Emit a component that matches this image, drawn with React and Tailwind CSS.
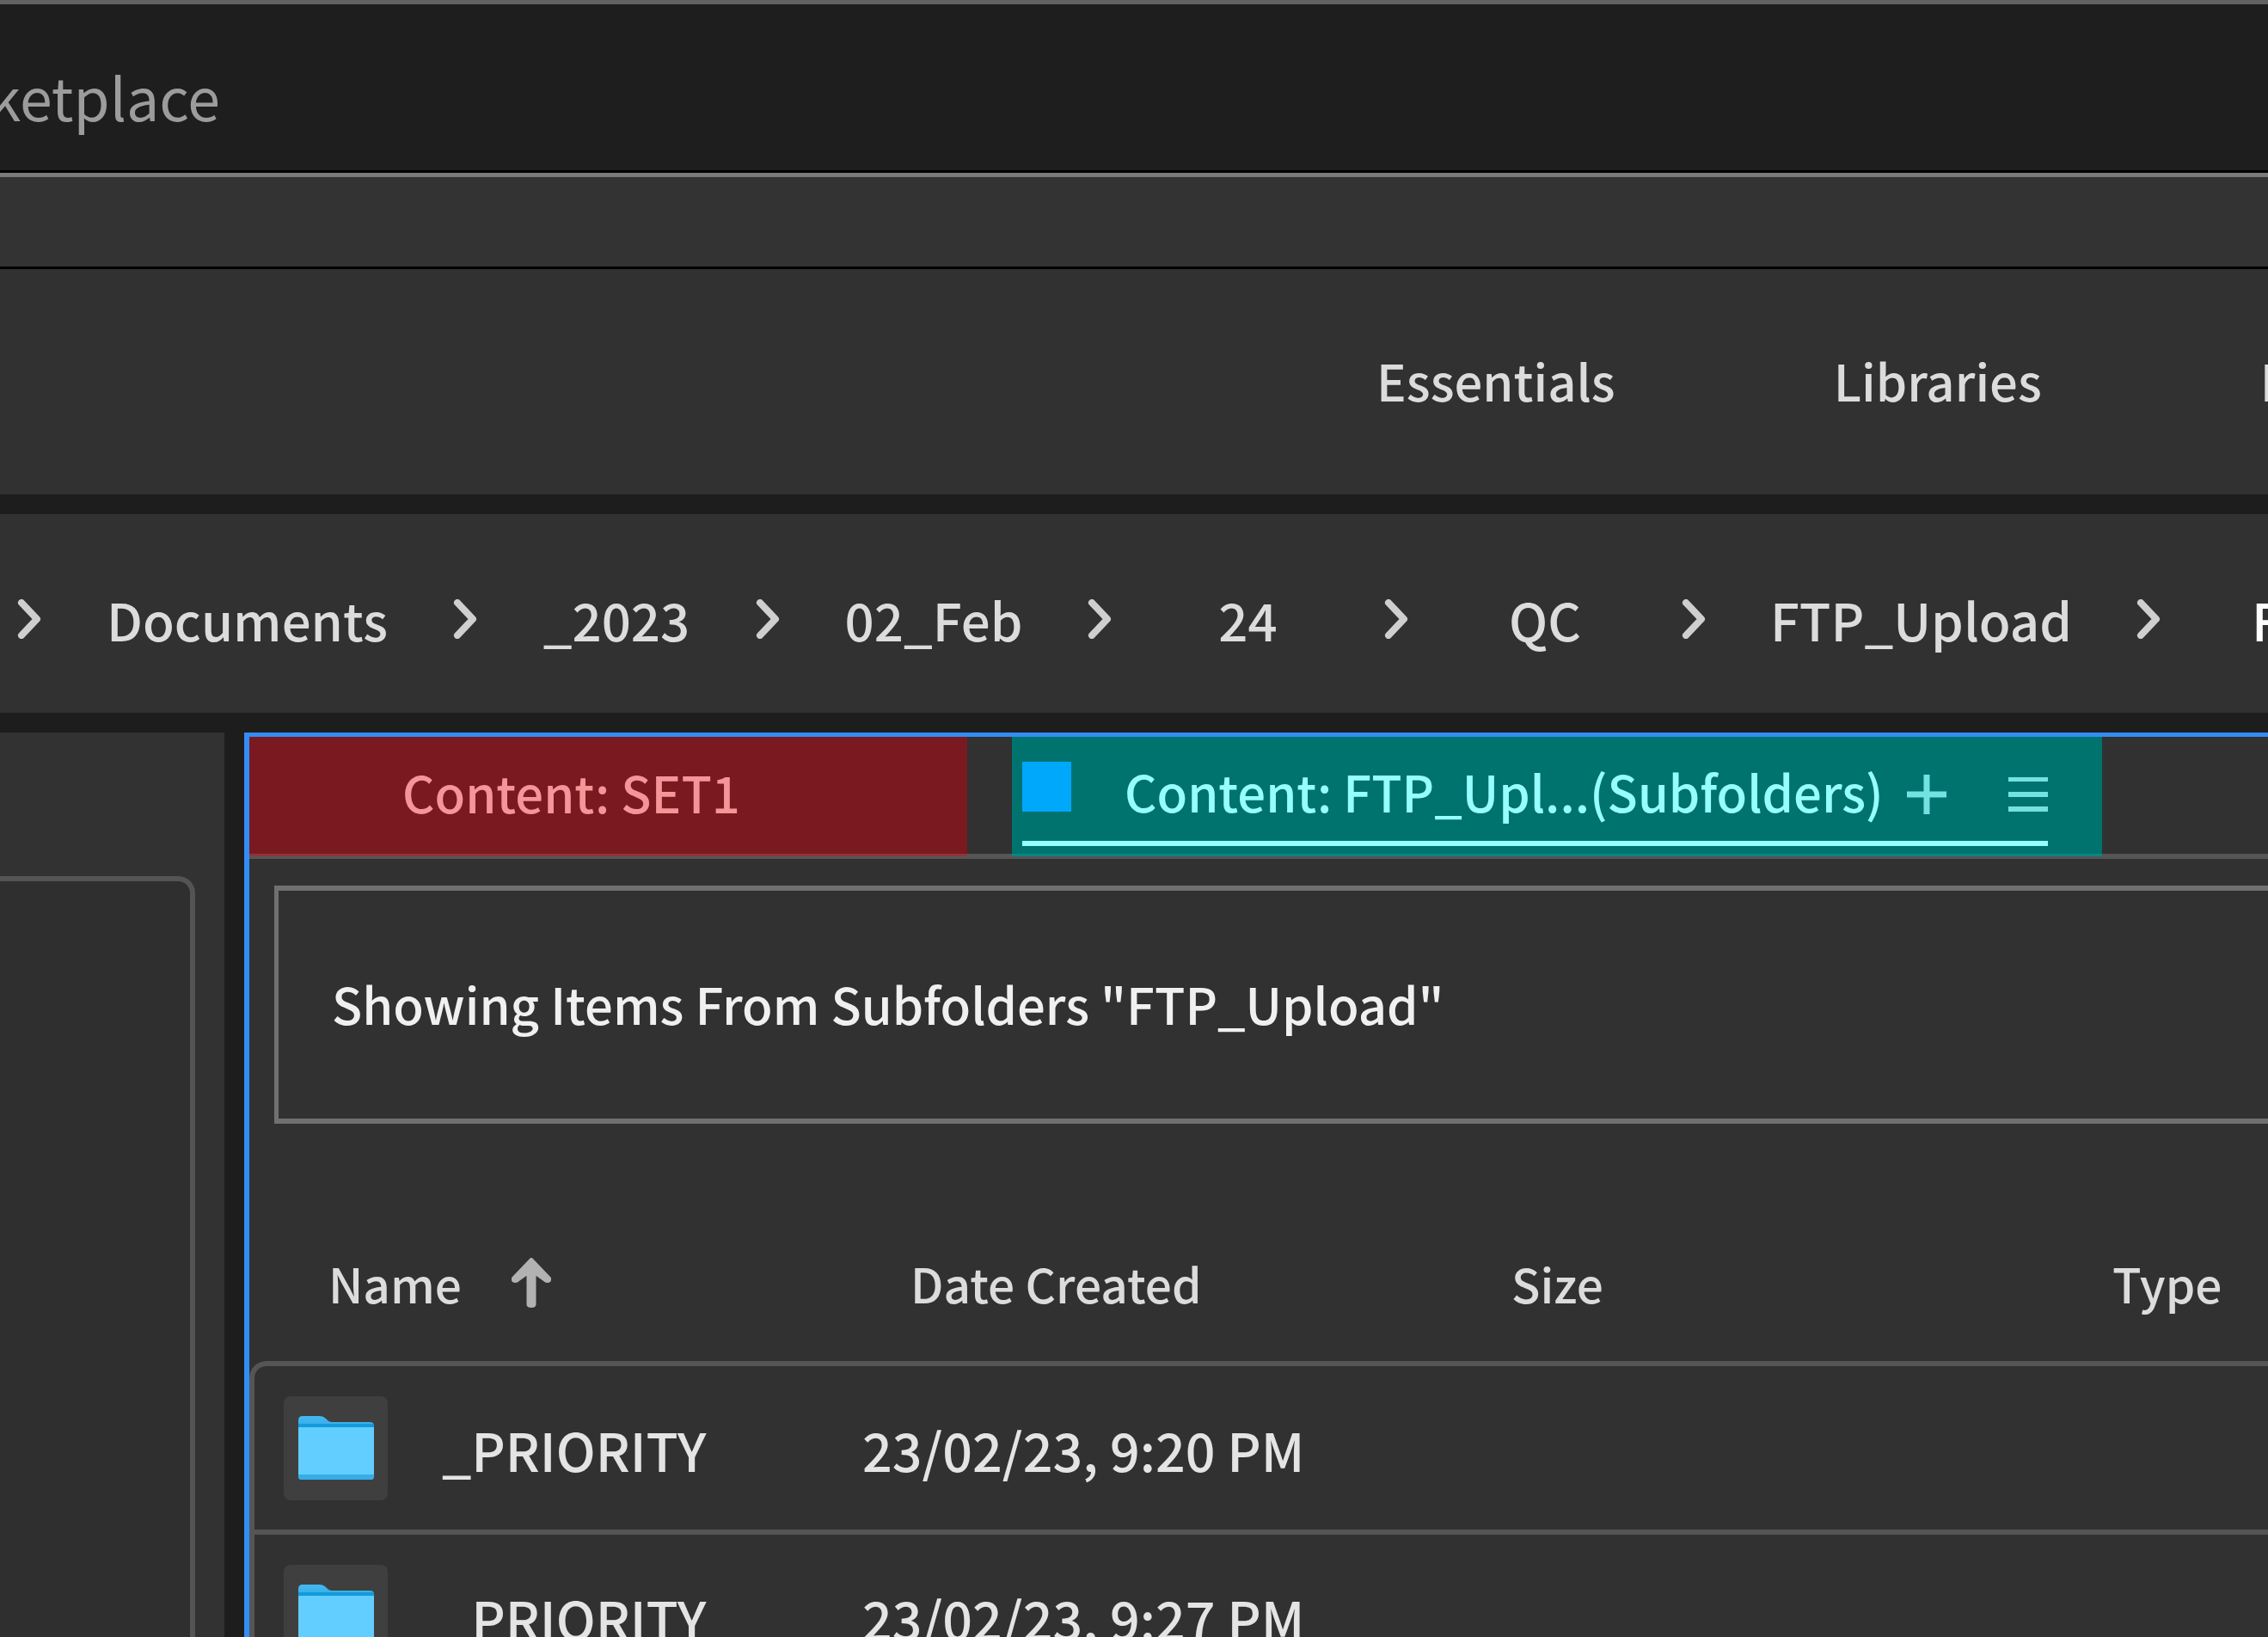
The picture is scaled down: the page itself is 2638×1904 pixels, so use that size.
const crumbs = [
  { label: 'Documents', width: 'w-[479px]' },
  { label: '_2023', width: 'w-[324px]' },
  { label: '02_Feb', width: 'w-[358px]' },
  { label: '24', width: 'w-[317px]' },
  { label: 'QC', width: 'w-[318px]' },
  { label: 'FTP_Upload', width: 'w-[501px]' },
];

const files = [
  { id: 1, name: '_PRIORITY', created: '23/02/23, 9:20 PM' },
  { id: 2, name: '_PRIORITY', created: '23/02/23, 9:27 PM' },
];

function Chevron() {
  return (
    <svg viewBox="0 0 28 46" className="h-[46px] w-7 shrink-0" fill="none" stroke="#cfcfcf" strokeWidth="8" strokeLinecap="round" strokeLinejoin="round" aria-hidden="true">
      <path d="M5 4 23 23 5 42" />
    </svg>
  );
}

function FolderIcon() {
  return (
    <svg viewBox="0 0 88 76" className="h-[76px] w-[88px]" aria-hidden="true">
      <defs>
        <linearGradient id="folderTab" x1="0" y1="0" x2="0" y2="1">
          <stop offset="0" stopColor="#45b9f0" />
          <stop offset="1" stopColor="#1b9fdf" />
        </linearGradient>
      </defs>
      <path d="M0 6Q0 1 5 1H25Q29 1 32 4L34 6Q36 8 39 8H83Q88 8 88 12V30H0Z" fill="url(#folderTab)" />
      <path d="M0 10H88V18H0Z" fill="#149ad9" />
      <path d="M0 14H88V71Q88 75 84 75H4Q0 75 0 71Z" fill="#62cdff" />
      <path d="M0 69H88V71Q88 75 84 75H4Q0 75 0 71Z" fill="#35aee8" />
    </svg>
  );
}

export default function App() {
  return (
    <div className="flex h-screen w-full flex-col overflow-hidden bg-[#1d1d1d] font-['Noto_Sans_CJK_SC','Noto_Sans',sans-serif] text-[58px] leading-[80px] font-medium whitespace-nowrap text-[#dcdcdc]">
      <header className="flex h-[201px] shrink-0 items-center border-t-[5px] border-b-[3px] border-t-[#626262] border-b-black bg-[#1e1e1e]">
        <div className="flex w-64 justify-end pt-5 text-[68px] font-normal text-[#9c9c9c]">Marketplace</div>
      </header>
      <div className="h-28 shrink-0 border-t-[5px] border-b-[3px] border-t-[#7a7a7a] border-b-black bg-[#333333]" />

      <nav aria-label="Workspaces" className="flex h-[262px] shrink-0 items-center gap-[254px] bg-[#313131] pb-1 pl-[1601px]">
        <button type="button" className="shrink-0">Essentials</button>
        <button type="button" className="shrink-0">Libraries</button>
        <button type="button" className="shrink-0">Filmstrip</button>
      </nav>

      <nav aria-label="Path" className="mt-[23px] flex h-[231px] shrink-0 items-center bg-[#313131] pt-3 pl-5 text-[60px]">
        <Chevron />
        {crumbs.map((crumb) => (
          <div key={crumb.label} className="flex shrink-0 items-center">
            <a href="#" className={`${crumb.width} text-center`}>{crumb.label}</a>
            <Chevron />
          </div>
        ))}
        <a href="#" className="shrink-0 pl-[106px] text-white">FTP_Upload</a>
      </nav>

      <main className="mt-[23px] flex min-h-0 flex-1 gap-[23px]">
        <aside className="w-[261px] shrink-0 bg-[#323232] pt-[167px] pr-[34px]">
          <div className="h-full rounded-tr-[20px] border-t-[6px] border-r-[6px] border-[#545454] bg-[#2f2f2f]" />
        </aside>

        <section className="min-w-0 flex-1 border-t-[5px] border-l-[6px] border-[#338df7] bg-[#313131]">
          <div className="flex h-[142px] gap-[52px] border-b-[6px] border-[#555555]">
            <button type="button" className="flex h-[139px] w-[835px] shrink-0 items-center border-b-[3px] border-[#91343a] bg-[#7a1a20] pb-2 pl-[178px] text-[#f59499]">
              Content: SET1
            </button>
            <div className="h-[139px] w-[1268px] shrink-0 border-b-[3px] border-[#058786] bg-[#00736f] pr-[63px] pl-3">
              <div className="flex h-[127px] items-center border-b-[6px] border-[#96fffd] pt-3 text-[#96fffd]">
                <span className="mt-[17px] h-[58px] w-[57px] shrink-0 self-start bg-[#00a8fb]" />
                <button type="button" className="ml-[62px] min-w-0 flex-1 pb-2 text-left">Content: FTP_Upl...(Subfolders)</button>
                <button type="button" aria-label="New panel" className="mr-[72px]">
                  <svg viewBox="0 0 46 46" className="size-[46px]" fill="none" stroke="#74e2e0" strokeWidth="7" aria-hidden="true">
                    <path d="M0 23H46M23 0V46" />
                  </svg>
                </button>
                <button type="button" aria-label="Panel menu">
                  <svg viewBox="0 0 46 40" className="h-10 w-[46px]" fill="#74e2e0" aria-hidden="true">
                    <path d="M0 0H46V5H0ZM0 17H46V23H0ZM0 34H46V40H0Z" />
                  </svg>
                </button>
              </div>
            </div>
          </div>

          <div className="mt-[31px] ml-[29px] flex h-[277px] items-center border-y-[6px] border-l-[5px] border-[#707070] pb-1 pl-[62px] text-[#f0f0f0]">
            Showing Items From Subfolders "FTP_Upload"
          </div>

          <table className="w-full table-fixed border-separate border-spacing-0">
            <colgroup>
              <col className="w-[695px]" />
              <col className="w-[699px]" />
              <col className="w-[699px]" />
              <col />
            </colgroup>
            <thead className="text-left text-[55px]">
              <tr className="h-[276px]">
                <th scope="col" className="p-0 pt-[94px] pl-[92px] font-medium">
                  <button type="button" className="flex items-center gap-[58px]">
                    Name
                    <svg viewBox="0 0 46 58" className="h-[58px] w-[46px]" fill="#b2b2b2" stroke="#b2b2b2" strokeWidth="4" strokeLinejoin="round" aria-hidden="true">
                      <path d="M23 2 44 24V26Q42 28 39 26L26.500 17V54Q26.500 56 23 56T19.500 54V17L7 26Q4 28 2 26V24Z" />
                    </svg>
                  </button>
                </th>
                <th scope="col" className="p-0 pt-[94px] pl-[74px] font-medium">Date Created</th>
                <th scope="col" className="p-0 pt-[94px] pl-[74px] font-medium">Size</th>
                <th scope="col" className="p-0 pt-[94px] pl-[74px] font-medium">Type</th>
              </tr>
            </thead>
            <tbody className="text-[61px] text-[#e4e4e4]">
              {files.map((file, index) => (
                <tr key={file.id} className="h-[196px]">
                  <td className={`border-t-[6px] border-l-[6px] border-[#555555] p-0 pl-[34px] ${index === 0 ? 'rounded-tl-[20px]' : ''}`}>
                    <div className="flex items-center gap-[63px]">
                      <span className="flex size-[121px] shrink-0 items-center justify-center rounded-lg bg-[#3f3f3f]">
                        <FolderIcon />
                      </span>
                      <span className="pt-1">{file.name}</span>
                    </div>
                  </td>
                  <td className="border-t-[6px] border-[#555555] p-0 pt-1 pl-[18px]">{file.created}</td>
                  <td className="border-t-[6px] border-[#555555] p-0" />
                  <td className="border-t-[6px] border-[#555555] p-0" />
                </tr>
              ))}
            </tbody>
          </table>
        </section>
      </main>
    </div>
  );
}
